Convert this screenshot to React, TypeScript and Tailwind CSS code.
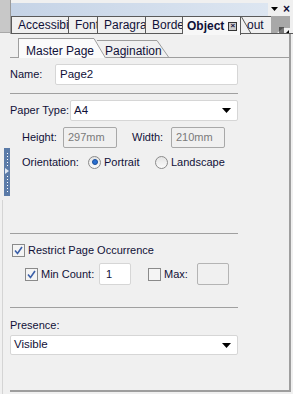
import React from 'react';

const font = { fontFamily: '"Liberation Sans", Arial, sans-serif' };

const Check = ({ checked }: { checked: boolean }) => (
  <span className="w-[13px] h-[13px] border border-[#8a8a8a] bg-[#f4f4f4] flex items-center justify-center shrink-0">
    {checked && (
      <svg width="9" height="9" viewBox="0 0 9 9">
        <path d="M1 4.5 L3.5 7.5 L8 1" stroke="#3b5fa8" strokeWidth="1.6" fill="none" />
      </svg>
    )}
  </span>
);

const Radio = ({ checked }: { checked: boolean }) => (
  <span className="w-[13px] h-[13px] rounded-full border border-[#8a8a8a] bg-gradient-to-b from-[#e4e4e4] to-[#fafafa] flex items-center justify-center shrink-0">
    {checked && <span className="w-[6px] h-[6px] rounded-full bg-[#2a6fd0] border border-[#1b4f9c]" />}
  </span>
);

const Arrow = () => (
  <svg width="9" height="5" viewBox="0 0 9 5" className="shrink-0">
    <path d="M0 0 H9 L4.5 5 Z" fill="#000" />
  </svg>
);

const topTabs = ['Accessibi', 'Font', 'Paragra', 'Borde'];
const tabWidths = ['w-[58px]', 'w-[29px]', 'w-[48px]', 'w-[37px]'];

export default function App() {
  return (
    <div className="w-[293px] h-[394px] bg-[#f0f0f0] relative overflow-hidden text-[11px] text-[#101038] whitespace-nowrap" style={font}>
      {/* header strip */}
      <div className="flex h-[34px]">
        <div className="w-[10px] h-[33px] bg-[#c8c8c8] border-b border-[#a8a8a8]" />
        <div className="flex-1 flex flex-col border-l border-[#9a9a9a]">
          <div className="h-[16px] flex items-center bg-[#f0f0f0] pt-[2px]">
            <div className="flex-1 h-[13px] bg-gradient-to-r from-[#c5d3e6] to-[#dde6f1]" />
            <div className="w-[25px] flex items-center justify-center gap-[5px] pb-[1px]">
              <svg width="7" height="4" viewBox="0 0 7 4"><path d="M0 0 H7 L3.5 4 Z" fill="#000" /></svg>
              <span className="text-[12px] font-bold leading-none">×</span>
            </div>
          </div>
          <div className="h-[18px] flex items-stretch">
            {topTabs.map((t, i) => (
              <div
                key={t}
                className={`${tabWidths[i]} border-t border-b border-r border-[#5a5a5a] ${i === 0 ? 'border-l' : ''} overflow-hidden pl-[6px] leading-[16px] text-[12px]`}
              >
                {t}
              </div>
            ))}
            <div className="w-[58px] border-t border-r border-[#5a5a5a] bg-[#f7f7f7] flex items-center gap-[4px] pl-[4px] font-bold text-[12px] -mb-[1px]">
              <span>Object</span>
              <span className="w-[9px] h-[9px] border border-[#333] bg-[#ccc] flex items-center justify-center text-[8px] leading-none">×</span>
            </div>
            <div className="relative w-[30px] border-b border-[#5a5a5a]">
              <svg width="30" height="18" viewBox="0 0 30 18" className="absolute left-0 top-0">
                <path d="M0 0.5 H30 M0 0 L10 17.5 H28" stroke="#5a5a5a" fill="none" />
              </svg>
              <span className="absolute left-[6px] top-[1px] leading-[16px] text-[12px]">out</span>
            </div>
            <div className="flex-1 relative border-b border-[#5a5a5a]">
              <svg width="22" height="18" viewBox="0 0 22 18" className="absolute left-0 top-0">
                <path d="M0 0 H19 V12 L12 12 L6 17 L0 17 Z" fill="#a8a8a8" />
                <path d="M8 12 H13 M8 14 H13 M8 16 H13" stroke="#000" strokeWidth="1" />
                <path d="M15 17 L18 14 V17 Z" fill="#000" />
              </svg>
            </div>
          </div>
        </div>
      </div>

      {/* main panel edges */}
      <div className="absolute left-[10px] top-[34px] right-[2px] bottom-[2px] border-r-2 border-b-2 border-[#9e9e9e]" />

      {/* left gripper */}
      <div className="absolute left-[4px] top-[148px] w-[6px] h-[48px] bg-[#5b7ba8] flex flex-col items-center justify-center gap-[2px]">
        {Array.from({ length: 5 }).map((_, i) => (
          <span key={`a${i}`} className="w-[1px] h-[1px] bg-white" />
        ))}
        <svg width="4" height="6" viewBox="0 0 4 6"><path d="M0 0 L4 3 L0 6 Z" fill="#dfe8f4" /></svg>
        {Array.from({ length: 6 }).map((_, i) => (
          <span key={`b${i}`} className="w-[1px] h-[1px] bg-white" />
        ))}
      </div>
      <div className="absolute left-0 top-[200px] w-[3px] h-[194px] border-r border-[#d4d4d4]" />

      {/* sub tabs */}
      <div className="ml-[10px] mr-[3px] mt-[4px] h-[20px] flex items-end border-b border-[#9e9e9e]">
        <div className="ml-[8px] relative w-[76px] h-[20px] -mb-[1px] bg-[#fbfbfb] border-l border-t border-[#9e9e9e]">
          <span className="absolute left-[7px] top-[3px] text-[12px]">Master Page</span>
          <svg width="12" height="20" viewBox="0 0 12 20" className="absolute -right-[12px] -top-[1px]">
            <path d="M0 0 L0 20 L12 20 Z" fill="#fbfbfb" />
            <path d="M0 0.5 L11.5 20" stroke="#9e9e9e" fill="none" />
          </svg>
        </div>
        <div className="relative ml-[3px] w-[60px] h-[17px] border-t border-[#9e9e9e]">
          <span className="absolute left-[8px] top-[1px] text-[12px]">Pagination</span>
          <svg width="12" height="17" viewBox="0 0 12 17" className="absolute -right-[12px] -top-[1px]">
            <path d="M0 0.5 L11.5 17" stroke="#9e9e9e" fill="none" />
          </svg>
        </div>
      </div>

      {/* content */}
      <div className="ml-[10px] w-[228px] flex flex-col">
        <div className="mt-[6px] flex items-center h-[21px]">
          <span className="w-[45px]">Name:</span>
          <div className="flex-1 h-[21px] bg-white border border-[#d6d6d6] rounded-[2px] pl-[4px] flex items-center text-[11.5px]">Page2</div>
        </div>
        <div className="mt-[8px] h-px bg-[#a0a0a0]" />
        <div className="mt-[6px] flex items-center h-[21px]">
          <span className="w-[60px]">Paper Type:</span>
          <div className="flex-1 h-[21px] bg-white border border-[#d6d6d6] rounded-[2px] pl-[3px] pr-[6px] flex items-center justify-between text-[11.5px]">
            <span>A4</span>
            <Arrow />
          </div>
        </div>
        <div className="mt-[6px] flex items-center h-[21px] pl-[12px]">
          <span className="w-[41px]">Height:</span>
          <div className="w-[54px] h-[21px] border border-[#a8a8a8] rounded-[2px] pl-[4px] flex items-center text-[#7a7a7a]">297mm</div>
          <span className="ml-[15px] w-[39px]">Width:</span>
          <div className="w-[54px] h-[21px] border border-[#a8a8a8] rounded-[2px] pl-[4px] flex items-center text-[#7a7a7a]">210mm</div>
        </div>
        <div className="mt-[5px] flex items-center h-[18px] pl-[12px]">
          <span className="w-[66px]">Orientation:</span>
          <Radio checked />
          <span className="ml-[3px] w-[51px]">Portrait</span>
          <Radio checked={false} />
          <span className="ml-[3px]">Landscape</span>
        </div>
        <div className="mt-[62px] h-px bg-[#a0a0a0]" />
        <div className="mt-[9px] flex items-center h-[14px] pl-[2px]">
          <Check checked />
          <span className="ml-[3px]">Restrict Page Occurrence</span>
        </div>
        <div className="mt-[6px] flex items-center h-[22px] pl-[15px]">
          <Check checked />
          <span className="ml-[3px] w-[58px]">Min Count:</span>
          <div className="w-[32px] h-[22px] bg-white border border-[#d6d6d6] rounded-[2px] pl-[6px] flex items-center">1</div>
          <span className="ml-[17px]"><Check checked={false} /></span>
          <span className="ml-[3px] w-[33px]">Max:</span>
          <div className="w-[32px] h-[22px] border border-[#b4b4b4] rounded-[2px]" />
        </div>
        <div className="mt-[22px] h-px bg-[#a0a0a0]" />
        <div className="mt-[10px] h-[14px] flex items-center">Presence:</div>
        <div className="mt-[3px] h-[20px] bg-white border border-[#d6d6d6] rounded-[2px] pl-[3px] pr-[6px] flex items-center justify-between text-[11.5px]">
          <span>Visible</span>
          <Arrow />
        </div>
      </div>
    </div>
  );
}
